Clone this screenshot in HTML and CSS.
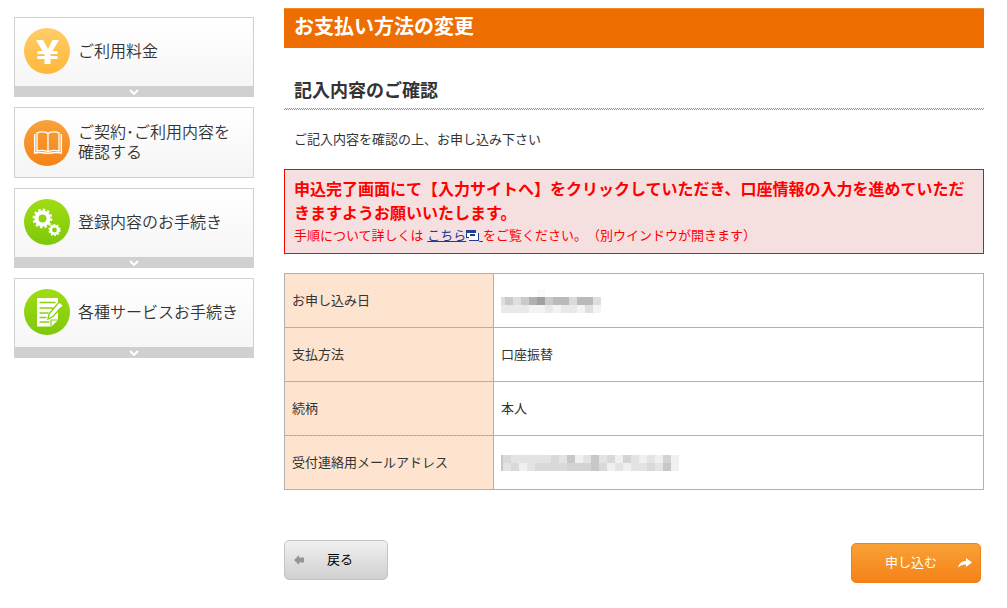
FILE: index.html
```html
<!DOCTYPE html>
<html lang="ja">
<head>
<meta charset="utf-8">
<meta name="viewport" content="width=device-width, initial-scale=1">
<title>お支払い方法の変更</title>
<link rel="stylesheet" href="styles.css">
</head>
<body>
<div class="page">
  <nav class="side">
    <a class="card expandable" href="#">
      <span class="card-body">
        <svg class="icon" viewBox="0 0 46 46" aria-hidden="true">
          <defs><linearGradient id="gy" x2="0" y2="1"><stop stop-color="#ffcd67"/><stop offset="1" stop-color="#ffb73a"/></linearGradient></defs>
          <circle cx="23" cy="23" r="23" fill="url(#gy)"/>
          <path d="M12 12h7l5 9 4.500-9h6.500l-6.500 11h5v3h-7v2h7v3h-7v5h-6v-5h-7v-3h7v-2h-7v-3h5z" fill="#fff"/>
        </svg>
        <span class="label">ご利用料金</span>
      </span>
      <span class="strip"><svg class="chevron" viewBox="0 0 10 6" aria-hidden="true"><path d="M1 1l4 4 4-4" fill="none" stroke="#fff" stroke-width="2"/></svg></span>
    </a>
    <a class="card" href="#">
      <span class="card-body">
        <svg class="icon" viewBox="0 0 46 46" aria-hidden="true">
          <defs><linearGradient id="go" x2="0" y2="1"><stop stop-color="#f8a33a"/><stop offset="1" stop-color="#f58218"/></linearGradient></defs>
          <circle cx="23" cy="23" r="23" fill="url(#go)"/>
          <g fill="none" stroke="#fff">
            <path d="M24 13.500c-2-2-8-2-11-.5v18c3-.8 9-.8 11 .8 2-1.600 8-1.600 11-.8v-18c-3-1.500-9-1.500-11 .5zM24 13.500v18" stroke-width="1.300"/>
            <path d="M10.700 14v19c4-.6 8-.6 11 .3h4.600c3-.9 7-.9 11-.3v-19" stroke-width="1.500"/>
          </g>
        </svg>
        <span class="label">ご契約･ご利用内容を<br>確認する</span>
      </span>
    </a>
    <a class="card expandable" href="#">
      <span class="card-body">
        <svg class="icon" viewBox="0 0 46 46" aria-hidden="true">
          <defs><linearGradient id="gg" x2="0" y2="1"><stop stop-color="#a0dc14"/><stop offset="1" stop-color="#7dc80a"/></linearGradient></defs>
          <circle cx="23" cy="23" r="23" fill="url(#gg)"/>
          <g fill="none" stroke="#fff">
            <circle cx="18.500" cy="19.500" r="6" stroke-width="4"/>
            <circle cx="18.500" cy="19.500" r="8.600" stroke-width="2.600" stroke-dasharray="2.400 2.103"/>
            <circle cx="30.500" cy="31" r="3.700" stroke-width="2.600"/>
            <circle cx="30.500" cy="31" r="5.300" stroke-width="1.600" stroke-dasharray="1.800 1.530"/>
          </g>
        </svg>
        <span class="label">登録内容のお手続き</span>
      </span>
      <span class="strip"><svg class="chevron" viewBox="0 0 10 6" aria-hidden="true"><path d="M1 1l4 4 4-4" fill="none" stroke="#fff" stroke-width="2"/></svg></span>
    </a>
    <a class="card expandable" href="#">
      <span class="card-body">
        <svg class="icon" viewBox="0 0 46 46" aria-hidden="true">
          <circle cx="23" cy="23" r="23" fill="url(#gg)"/>
          <path d="M13 9h21v22l-6.500 6.500h-14.500z" fill="#fff"/>
          <path d="M15.500 13.500h16M15.500 19h14M15.500 24h9M15.500 28.500h7M15.500 33h10" stroke="#8ccf0d" stroke-width="1.600"/>
          <path d="M27 37.500v-6.500h7" fill="none" stroke="#8ccf0d" stroke-width="1.200"/>
          <path d="M25 25l9-10.500 4 3-9 10-5 2.500z" fill="#fff" stroke="#8ccf0d" stroke-width="1.300"/>
          <path d="M33.500 15.500l2-1.500 3 2.500-1.500 2z" fill="#fff"/>
        </svg>
        <span class="label">各種サービスお手続き</span>
      </span>
      <span class="strip"><svg class="chevron" viewBox="0 0 10 6" aria-hidden="true"><path d="M1 1l4 4 4-4" fill="none" stroke="#fff" stroke-width="2"/></svg></span>
    </a>
  </nav>
  <main class="main">
    <h1 class="title">お支払い方法の変更</h1>
    <h2 class="subtitle">記入内容のご確認</h2>
    <p class="lead">ご記入内容を確認の上、お申し込み下さい</p>
    <section class="notice">
      <strong class="notice-main">申込完了画面にて【入力サイトへ】をクリックしていただき、口座情報の入力を進めていただきますようお願いいたします。</strong>
      <p class="notice-sub">手順について詳しくは <a class="link" href="#">こちら<svg class="window" viewBox="0 0 13 11" aria-hidden="true" shape-rendering="crispEdges"><path d="M0 0h10v8h-10z" fill="#1f3c96"/><path d="M1 3h8v4h-8z" fill="#fff"/><path d="M3 3h10v8h-10z" fill="#1f3c96"/><path d="M3 3h9v7h-9z" fill="#fff"/><path d="M4 4h5v2h-5z" fill="#1f3c96"/></svg>&nbsp;</a>をご覧ください。（別ウインドウが開きます）</p>
    </section>
    <table class="details">
      <tr><th scope="row">お申し込み日</th><td><svg class="mask" width="100" height="24" aria-label="非表示" shape-rendering="crispEdges"><path d="M36 0h8v8h-8z" fill="#fafafa"/><path d="M0 8h4v8h-4zM12 8h8v8h-8zM92 8h8v8h-8z" fill="#dedede"/><path d="M4 8h8v8h-8zM20 8h8v8h-8zM44 8h8v8h-8z" fill="#cacaca"/><path d="M28 8h8v8h-8z" fill="#b0b0b0"/><path d="M36 8h8v8h-8z" fill="#a0a0a0"/><path d="M52 8h16v8h-16zM76 8h16v8h-16z" fill="#bababa"/><path d="M68 8h8v8h-8z" fill="#dadada"/><path d="M0 16h28v8h-28zM44 16h8v8h-8zM60 16h16v8h-16z" fill="#e9e9e9"/><path d="M28 16h16v8h-16zM52 16h8v8h-8zM76 16h8v8h-8zM92 16h8v8h-8z" fill="#f3f3f3"/><path d="M84 16h8v8h-8z" fill="#dfdfdf"/></svg></td></tr>
      <tr><th scope="row">支払方法</th><td>口座振替</td></tr>
      <tr><th scope="row">続柄</th><td>本人</td></tr>
      <tr><th scope="row">受付連絡用メールアドレス</th><td><svg class="mask" width="178" height="16" aria-label="非表示" shape-rendering="crispEdges"><path d="M0 0h178v16h-178z" fill="#e3e3e3"/><path d="M2 0h8v8h-8zM50 0h8v8h-8zM106 0h8v8h-8zM122 0h8v8h-8zM10 8h8v8h-8zM34 8h32v8h-32zM82 8h8v8h-8zM98 8h8v8h-8zM146 8h8v8h-8z" fill="#d9d9d9"/><path d="M0 0h2v16h-2zM66 0h8v8h-8zM90 0h8v16h-8zM162 8h8v8h-8z" fill="#c7c7c7"/><path d="M66 8h24v8h-24zM122 0h8v8h-8zM162 0h8v8h-8z" fill="#d3d3d3"/><path d="M74 0h8v8h-8zM114 0h8v8h-8zM138 0h8v8h-8zM154 0h8v8h-8zM170 0h8v16h-8zM18 8h8v8h-8zM106 8h8v8h-8zM122 8h8v8h-8z" fill="#f0f0f0"/></svg></td></tr>
    </table>
    <form class="actions">
      <button class="btn back" type="button"><svg class="arrow-back" viewBox="0 0 10 10" aria-hidden="true"><path d="M0 5l5-5v2.500h5v5h-5v2.500z" fill="#969696"/></svg>戻る</button>
      <button class="btn apply" type="button">申し込む<svg class="arrow-go" viewBox="0 0 14 10" aria-hidden="true"><path d="M0 9.500c1-4 4-6.500 8-6.500v-3l6 4.500-6 4.500v-2.500c-3 0-6 1-8 3z" fill="#fff"/></svg></button>
    </form>
  </main>
</div>
</body>
</html>
```
FILE: styles.css
```css
* { box-sizing: border-box; }

body {
  margin: 0;
  background: #fff;
  color: #333;
  font: 13px/20px "Liberation Sans", "Noto Sans CJK JP", sans-serif;
  text-spacing-trim: space-all;
}

h1, h2, p { margin: 0; }

.page {
  display: flex;
  gap: 30px;
  padding: 8px 23px 8px 14px;
}

.side {
  display: flex;
  flex-direction: column;
  flex: 0 0 240px;
  gap: 10px;
  padding-top: 9px;
}

.card {
  display: block;
  border: 1px solid #d0d0d0;
  background: linear-gradient(#fff, #f4f4f4);
  color: #333;
  text-decoration: none;
}

.expandable { border-bottom: 0; }

.card-body {
  display: flex;
  align-items: center;
  gap: 8px;
  height: 69px;
  padding-left: 9px;
}

.expandable .card-body { height: 68px; }

.icon { flex: none; width: 46px; height: 46px; }

.expandable .icon { margin-bottom: 3px; }

.label { font-size: 16px; line-height: 20px; font-weight: 350; }

.strip {
  display: flex;
  align-items: center;
  justify-content: center;
  height: 11px;
  background: #d0d0d0;
}

.chevron { width: 10px; height: 6px; }

.main { flex: 1; min-width: 0; }

.title {
  height: 40px;
  padding: 0 10px;
  border-top: 1px solid #f08c2c;
  background: #ee6d00;
  color: #fff;
  font-size: 20px;
  line-height: 36px;
}

.subtitle {
  margin-top: 28px;
  padding: 1px 10px 5px;
  background: repeating-conic-gradient(#dd7b2a 0 25%, #fff 0 50%) 0 100% / 2px 2px repeat-x;
  font-size: 18px;
  line-height: 28px;
}

.lead { padding: 20px 10px 19px; }

.notice {
  padding: 8px 9px 7px;
  border: 1px solid #f00;
  background: repeating-conic-gradient(#f8dddd 0 25%, #f2e2e4 0 50%) 0 0 / 4px 4px;
  color: #f00;
}

.notice-main { display: block; font-size: 16px; line-height: 24px; }

.link { color: #1f3c96; }

.window { width: 13px; height: 11px; vertical-align: -1px; }

.details {
  width: 100%;
  margin-top: 19px;
  border-collapse: collapse;
  table-layout: fixed;
}

.details th, .details td {
  height: 54px;
  padding: 0 7px;
  border: 1px solid #b0b0b0;
  text-align: left;
  font-weight: normal;
}

.details th {
  width: 209px;
  background: #fde9d9 linear-gradient(135deg, #fddcc0 25%, #fdebdd 25% 50%, #fddcc0 50% 75%, #fdebdd 75%) 0 0 / 4px 4px;
}

.mask { display: block; }

.actions {
  display: flex;
  justify-content: space-between;
  margin-top: 50px;
  padding-right: 3px;
}

.btn {
  display: flex;
  align-items: center;
  height: 40px;
  border-radius: 5px;
  font: inherit;
}

.back {
  gap: 23px;
  width: 104px;
  padding: 0 9px;
  border: 1px solid #c4c4c4;
  background: linear-gradient(#f0f0f0, #d0d0d0);
  color: #000;
}

.apply {
  gap: 21px;
  justify-content: flex-end;
  width: 130px;
  margin-top: 3px;
  padding: 0 8px;
  border: 1px solid #f0821e;
  background: linear-gradient(#f8a136, #f58218);
  color: #fff;
}

.arrow-back { width: 10px; height: 10px; }
.arrow-go { width: 14px; height: 10px; }
```
